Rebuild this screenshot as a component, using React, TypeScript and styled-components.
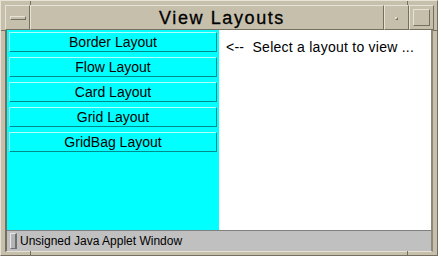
import React from "react";
import styled, { createGlobalStyle, css } from "styled-components";

const LIGHT = "#e6e2d6";
const BEIGE = "#c6bfac";
const DARK = "#756f60";

const Global = createGlobalStyle`
  html, body { margin: 0; padding: 0; background: #fff; }
  * { box-sizing: border-box; }
`;

const raised = css`
  border-style: solid;
  border-width: 1px;
  border-color: ${LIGHT} ${DARK} ${DARK} ${LIGHT};
`;

const Window = styled.div`
  position: relative;
  width: 438px;
  height: 256px;
  background: ${BEIGE};
  ${raised};
  padding: 4px 3px 3px 4px;
  display: flex;
  flex-direction: column;
  font-family: "Liberation Sans", Arial, sans-serif;
`;

const Crack = styled.span<{ $x?: number; $y?: number; $w: number; $h: number; $right?: boolean; $bottom?: boolean }>`
  position: absolute;
  background: ${DARK};
  width: ${(p) => p.$w}px;
  height: ${(p) => p.$h}px;
  ${(p) => (p.$right ? `right: ${p.$x}px;` : `left: ${p.$x}px;`)}
  ${(p) => (p.$bottom ? `bottom: ${p.$y}px;` : `top: ${p.$y}px;`)}
`;

const TitleBar = styled.div`
  display: flex;
  height: 25px;
  flex: none;
`;

const TitleButton = styled.div`
  width: 25px;
  height: 25px;
  ${raised};
  background: ${BEIGE};
  display: flex;
  align-items: center;
  justify-content: center;
`;

const MenuBar = styled.div`
  width: 16px;
  height: 4px;
  ${raised};
  background: ${BEIGE};
  margin-top: 1px;
`;

const MinDot = styled.div`
  width: 3px;
  height: 3px;
  ${raised};
  background: ${BEIGE};
  margin-top: 2px;
`;

const MaxBox = styled.div`
  width: 17px;
  height: 17px;
  ${raised};
  background: ${BEIGE};
`;

const Title = styled.div`
  flex: 1;
  height: 25px;
  ${raised};
  display: flex;
  align-items: center;
  justify-content: center;
  font-size: 18px;
  letter-spacing: 1.6px;
  color: #000;
  padding: 1px 0 0 30px;
  -webkit-text-stroke: 0.3px #000;
`;

const Main = styled.div`
  flex: 1;
  display: flex;
  flex-direction: column;
  border-left: 2px solid ${DARK};
  border-right: 2px solid #8d887a;
  border-bottom: 1px solid ${LIGHT};
  margin-right: 1px;
`;

const Body = styled.div`
  display: flex;
  height: 200px;
`;

const LeftPanel = styled.div`
  width: 212px;
  background: #00ffff;
  padding: 2px;
  display: flex;
  flex-direction: column;
  gap: 5px;
`;

const LayoutButton = styled.div`
  height: 20px;
  border-style: solid;
  border-width: 1px;
  border-color: #b0ffff #008c8c #008c8c #b0ffff;
  background: #00ffff;
  display: flex;
  align-items: center;
  justify-content: center;
  font-size: 14px;
  color: #000;
`;

const RightPanel = styled.div`
  flex: 1;
  background: #fff;
  padding: 9px 7px;
  font-size: 14px;
  letter-spacing: 0.25px;
  color: #000;
  white-space: pre;
`;

const StatusBar = styled.div`
  height: 21px;
  background: #c0c0c0;
  border-top: 1px solid #808080;
  display: flex;
  align-items: center;
  padding-left: 3px;
  gap: 3px;
  font-size: 12px;
  color: #000;
`;

const Knob = styled.div`
  width: 7px;
  height: 16px;
  border-style: solid;
  border-width: 1px 2px 1px 1px;
  border-color: #e8e8e8 #707070 #707070 #e8e8e8;
  background: #b4b4b4;
`;

const layouts = ["Border Layout", "Flow Layout", "Card Layout", "Grid Layout", "GridBag Layout"];

export default function App() {
  return (
    <>
      <Global />
      <Window>
        <Crack $x={29} $y={0} $w={1} $h={4} />
        <Crack $x={0} $y={29} $w={4} $h={1} />
        <Crack $x={29} $y={0} $w={1} $h={4} $right />
        <Crack $x={0} $y={29} $w={4} $h={1} $right />
        <Crack $x={29} $y={0} $w={1} $h={4} $bottom />
        <Crack $x={29} $y={0} $w={1} $h={4} $right $bottom />
        <TitleBar>
          <TitleButton>
            <MenuBar />
          </TitleButton>
          <Title>View Layouts</Title>
          <TitleButton>
            <MinDot />
          </TitleButton>
          <TitleButton>
            <MaxBox />
          </TitleButton>
        </TitleBar>
        <Main>
          <Body>
            <LeftPanel>
              {layouts.map((l) => (
                <LayoutButton key={l}>{l}</LayoutButton>
              ))}
            </LeftPanel>
            <RightPanel>{"<--  Select a layout to view ..."}</RightPanel>
          </Body>
          <StatusBar>
            <Knob />
            <span>Unsigned Java Applet Window</span>
          </StatusBar>
        </Main>
      </Window>
    </>
  );
}
